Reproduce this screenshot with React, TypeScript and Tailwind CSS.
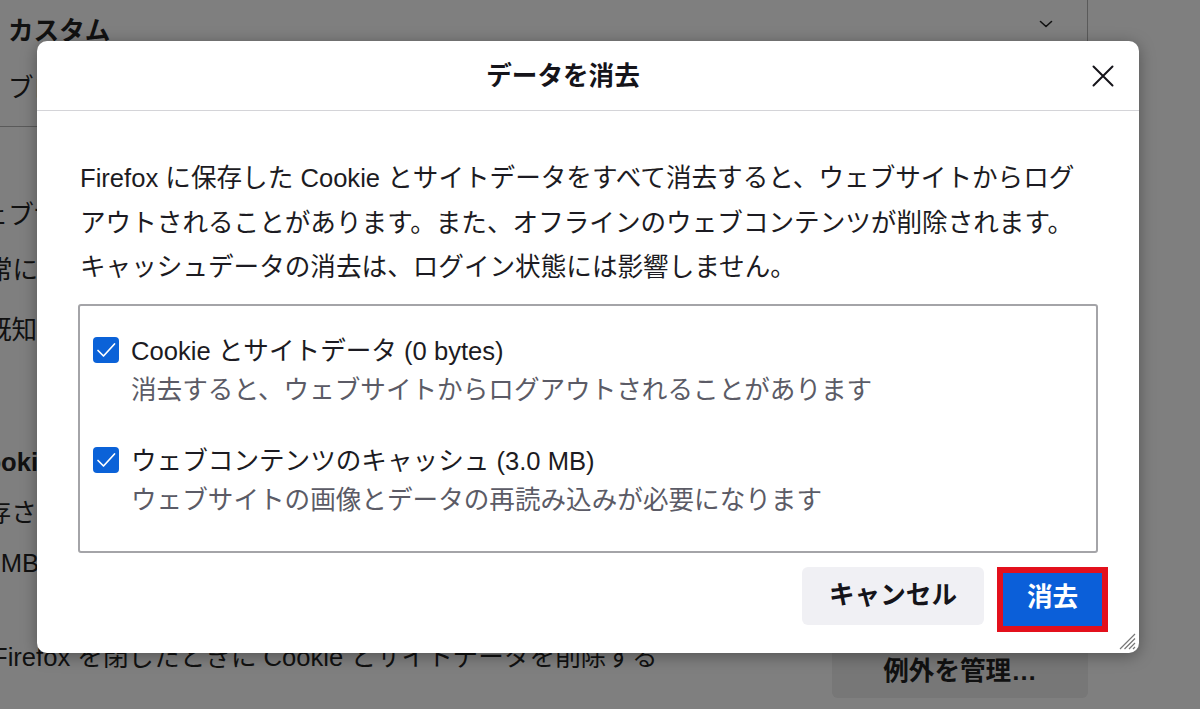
import React from 'react';

const font = "font-['Liberation_Sans','Noto_Sans_CJK_JP',sans-serif]";

const CheckBox = () => (
  <div className="mt-[5px] flex h-[26px] w-[26px] items-center justify-center rounded-[4px] bg-[#0b62d8]">
    <svg width="22" height="22" viewBox="0 0 22 22" fill="none">
      <path d="M3 11.5 L8.5 17 L19.5 5" stroke="white" strokeWidth="1.7" strokeLinecap="round" strokeLinejoin="round" />
    </svg>
  </div>
);

const Option = ({ label, desc }: { label: string; desc: string }) => (
  <div className="grid grid-cols-[26px_1fr] gap-x-[12px]">
    <CheckBox />
    <p className="whitespace-nowrap leading-[39px] text-[#1c1b22]">{label}</p>
    <div />
    <p className="whitespace-nowrap leading-[39px] text-[#5b5b66]">{desc}</p>
  </div>
);

const App = () => {
  return (
    <div className={`relative h-[709px] w-[1200px] overflow-hidden bg-[#7f7f7f] text-[25.6px] text-[#111111] ${font}`}>
      {/* settings page behind the dialog */}
      <div className="flex flex-col">
        <div className="flex h-[127px] w-[1088px] flex-col border-r border-b border-[#5a5a5a]">
          <div className="flex h-[64px] items-center justify-between pl-[8px] pr-[34px]">
            <p className="-mt-[2px] font-bold leading-[30px]">カスタム</p>
            <svg width="14" height="8" viewBox="0 0 14 8" fill="none" className="-mt-[16px]">
              <path d="M1.5 1.5 L7 6.5 L12.5 1.5" stroke="#111" strokeWidth="1.6" strokeLinecap="round" strokeLinejoin="round" />
            </svg>
          </div>
          <div className="flex h-[48px] items-center pl-[8px]">
            <p className="whitespace-nowrap leading-[30px]">ブロックするトラッカーとスクリプトを選択してください</p>
          </div>
        </div>
        <p className="mt-[73px] ml-[-43px] h-[30px] whitespace-nowrap leading-[30px]">
          ウェブサイトに “Do Not Track” 信号を送り、追跡されたくないことを知らせます
        </p>
        <p className="mt-[25px] ml-[-13px] h-[30px] whitespace-nowrap leading-[30px]">常に</p>
        <p className="mt-[30px] ml-[-14px] h-[30px] whitespace-nowrap leading-[30px]">
          既知のトラッカーをブロックする設定時のみ
        </p>
        <p className="mt-[102px] ml-[-33px] h-[30px] whitespace-nowrap font-bold leading-[30px]">
          Cookie とサイトデータ
        </p>
        <p className="mt-[21px] ml-[-40px] h-[30px] whitespace-nowrap leading-[30px]">
          保存されている Cookie、サイトデータ、キャッシュが現在
        </p>
        <p className="mt-[20px] ml-[-42px] h-[30px] whitespace-nowrap leading-[30px]">
          3.0 MB のディスク領域を使用しています。
        </p>
        <div className="mt-[62px] flex w-[1088px] items-start justify-between">
          <p className="mt-[2px] ml-[-8px] whitespace-nowrap leading-[30px]">
            Firefox を閉じたときに Cookie とサイトデータを削除する
          </p>
          <div className="flex h-[58px] w-[256px] items-center justify-center rounded-[6px] bg-[#777777] pt-[4px]">
            <span className="font-bold">例外を管理…</span>
          </div>
        </div>
      </div>

      {/* dialog */}
      <div className="absolute left-[37px] top-[41px] flex h-[612px] w-[1102px] flex-col rounded-[10px] bg-white shadow-[0_3px_16px_rgba(0,0,0,0.35)]">
        <div className="grid h-[70px] grid-cols-[1fr_auto_1fr] items-center border-b border-[#d4d4d8]">
          <div />
          <h1 className="mr-[50px] font-bold leading-[30px] text-[#15141a]">データを消去</h1>
          <div className="flex justify-end pr-[25px]">
            <svg width="22" height="22" viewBox="0 0 22 22" fill="none">
              <path d="M1.5 1.5 L20.5 20.5 M20.5 1.5 L1.5 20.5" stroke="#15141a" strokeWidth="2" strokeLinecap="round" />
            </svg>
          </div>
        </div>

        <div className="flex flex-col px-[41px]">
          <p className="mt-[45px] whitespace-nowrap pl-[2px] leading-[44.5px] text-[#1c1b22]">
            Firefox に保存した Cookie とサイトデータをすべて消去すると、ウェブサイトからログ
            <br />
            アウトされることがあります。また、オフラインのウェブコンテンツが削除されます。
            <br />
            キャッシュデータの消去は、ログイン状態には影響しません。
          </p>

          <div className="mt-[14px] flex h-[249px] flex-col gap-y-[32px] rounded-[3px] border-2 border-[#a4a4a8] pt-[26px] pl-[13px]">
            <Option label="Cookie とサイトデータ (0 bytes)" desc="消去すると、ウェブサイトからログアウトされることがあります" />
            <Option label="ウェブコンテンツのキャッシュ (3.0 MB)" desc="ウェブサイトの画像とデータの再読み込みが必要になります" />
          </div>

          <div className="mt-[14px] flex items-start justify-end gap-x-[13px]">
            <button className="flex h-[58px] w-[182px] items-center justify-center rounded-[6px] bg-[#f0f0f4] font-bold text-[#15141a]">
              キャンセル
            </button>
            <div className="-mr-[10px] flex h-[65px] w-[111px] border-[6px] border-[#e3101c]">
              <button className="flex flex-1 items-center justify-center bg-[#0b5fd9] pb-[4px] font-bold text-white">
                消去
              </button>
            </div>
          </div>
        </div>

        <svg width="20" height="20" viewBox="0 0 20 20" className="absolute right-[2px] bottom-[2px]" fill="none">
          <path d="M18 3 L3 18 M18 7.5 L7.5 18 M18 12 L12 18 M18 16 L16 18" stroke="#777777" strokeWidth="1.2" />
        </svg>
      </div>
    </div>
  );
};

export default App;
